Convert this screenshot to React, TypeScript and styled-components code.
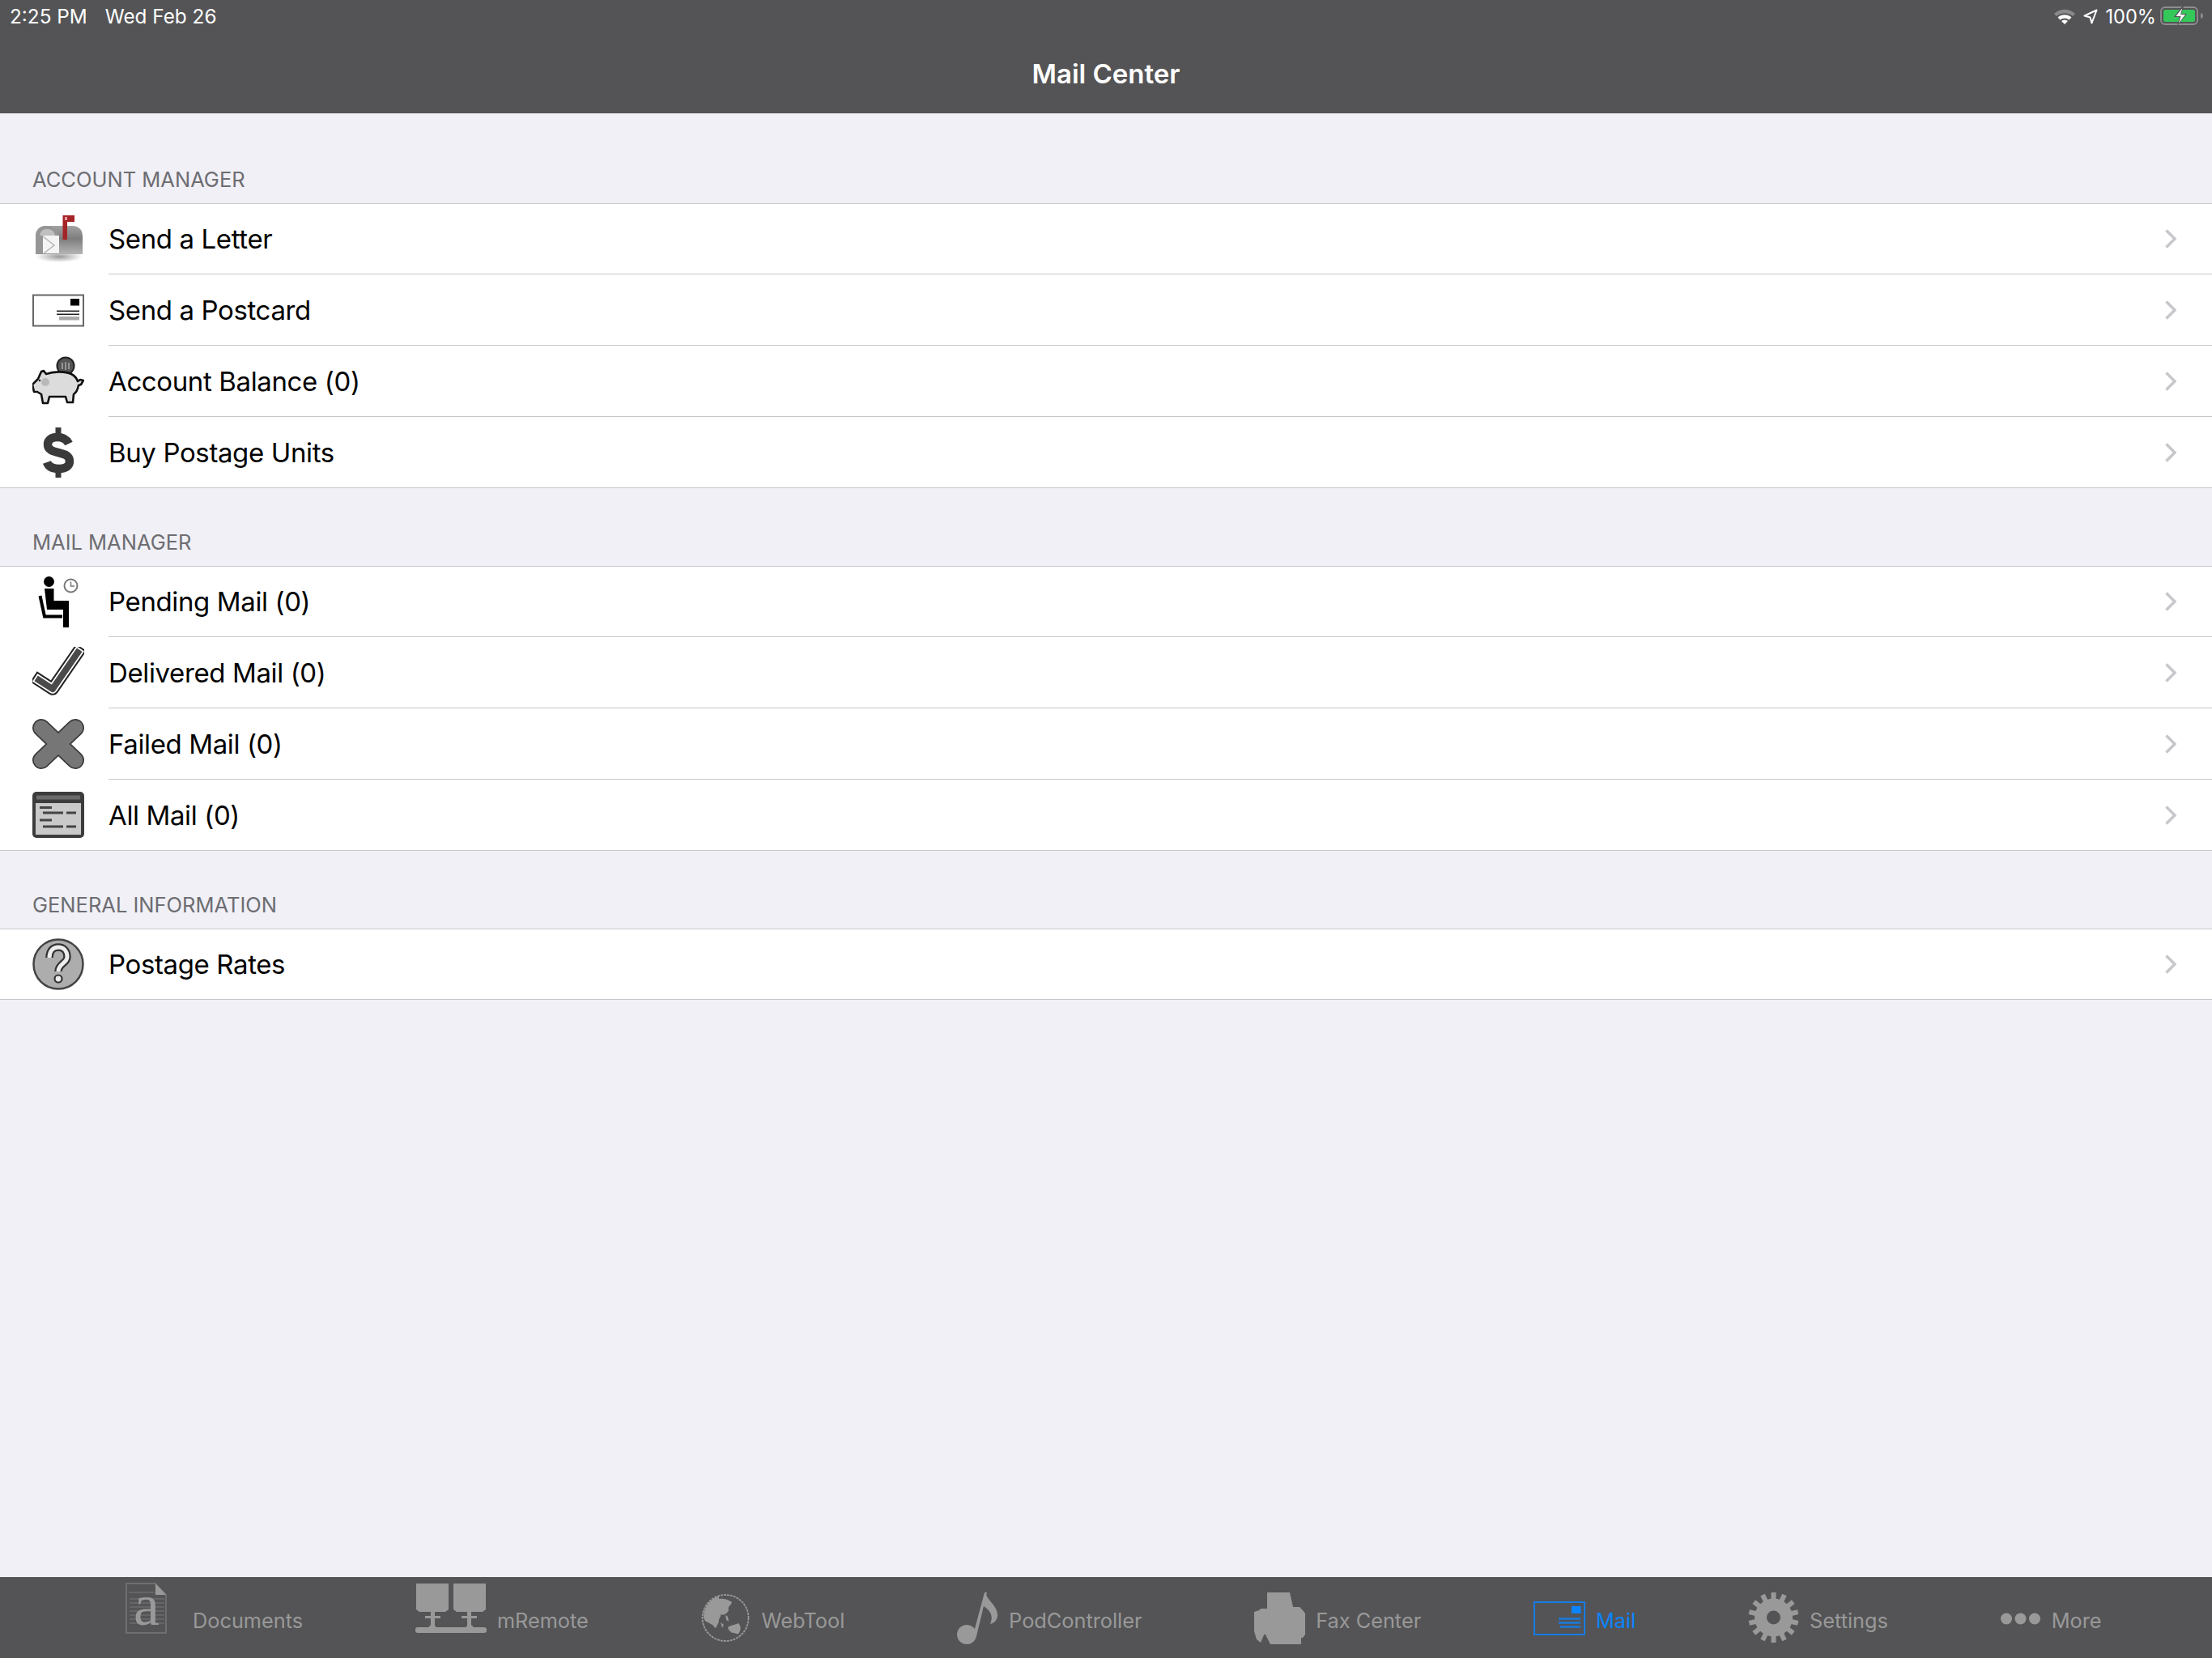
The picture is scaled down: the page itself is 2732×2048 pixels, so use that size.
import { createGlobalStyle } from 'styled-components';
import styled from 'styled-components';
import type { ReactNode } from 'react';

const Global = createGlobalStyle`
  html, body {
    margin: 0;
    padding: 0;
    background: #f0f0f6;
  }
  * {
    box-sizing: border-box;
  }
`;

const Screen = styled.div`
  width: 2732px;
  height: 2048px;
  display: flex;
  flex-direction: column;
  overflow: hidden;
  background: #f0f0f6;
  font-family: Inter, "Liberation Sans", sans-serif;
`;
const Header = styled.header`
  height: 140px;
  flex: none;
  background: #545456;
  color: #fff;
`;
const StatusBar = styled.div`
  height: 40px;
  padding: 0 10px 0 12px;
  display: flex;
  align-items: center;
  justify-content: space-between;
  font-size: 24.3px;
  color: #fff;
`;
const StatusGroup = styled.div`
  display: flex;
  align-items: center;
`;
const DateText = styled.span`
  margin-left: 22px;
`;
const Percent = styled.span`
  font-size: 23.6px;
`;
const StatusIcon = styled.svg<{ $right?: number; $left?: number }>`
  margin-right: ${(p) => p.$right ?? 0}px;
  margin-left: ${(p) => p.$left ?? 0}px;
`;
const Title = styled.h1`
  margin: 0;
  height: 100px;
  padding-top: 1px;
  display: flex;
  align-items: center;
  justify-content: center;
  font-size: 33px;
  font-weight: 600;
`;
const Content = styled.main`
  flex: 1;
`;
const SectionTitle = styled.div<{ $first?: boolean }>`
  height: ${(p) => (p.$first ? 111 : 96)}px;
  padding: 0 40px 14px;
  display: flex;
  align-items: flex-end;
  font-size: 25.5px;
  line-height: 30px;
  color: #6d6d72;
  text-transform: uppercase;
`;
const Group = styled.ul`
  margin: 0;
  padding: 0;
  list-style: none;
  background: #fff;
  border-top: 1px solid #c8c7cc;
  border-bottom: 1px solid #c8c7cc;
`;
const Row = styled.li`
  height: 88px;
  padding-left: 40px;
  display: flex;
  align-items: center;
  &:first-child,
  &:last-child {
    height: 87px;
  }
  &:only-child {
    height: 86px;
  }
  &:last-child > div {
    border-bottom: none;
  }
`;
const RowIcon = styled.svg`
  width: 64px;
  height: 64px;
  flex: none;
`;
const RowBody = styled.div`
  flex: 1;
  height: 100%;
  margin-left: 30px;
  padding-right: 44px;
  display: flex;
  align-items: center;
  justify-content: space-between;
  border-bottom: 1px solid #c8c7cc;
`;
const RowLabel = styled.span`
  font-size: 33px;
  letter-spacing: -0.38px;
  color: #000;
`;
const Chevron = styled.svg`
  width: 14px;
  height: 24px;
`;
const TabBar = styled.nav`
  height: 100px;
  flex: none;
  padding-left: 155px;
  display: flex;
  gap: 138.8px;
  background: #545456;
`;
const Tab = styled.div<{ $active?: boolean }>`
  height: 100%;
  display: flex;
  color: ${(p) => (p.$active ? '#0a84ff' : '#999')};
`;
const TabIcon = styled.svg<{ $top: number; $width: number; $height: number; $gap?: number }>`
  width: ${(p) => p.$width}px;
  height: ${(p) => p.$height}px;
  margin-top: ${(p) => p.$top}px;
  margin-right: ${(p) => p.$gap ?? 13}px;
  flex: none;
  overflow: visible;
`;
const TabLabel = styled.span`
  margin-top: 38px;
  font-size: 25.3px;
  line-height: 32px;
`;

function ChevronRight() {
  return (
    <Chevron viewBox="0 0 14 24">
      <path d="M1.500 1.500L12 12L1.500 22.500" fill="none" stroke="#c7c7cc" strokeWidth="3.600" />
    </Chevron>
  );
}

function Wifi() {
  return (
    <StatusIcon $right={9} width="28" height="20" viewBox="0 0 28 20">
      <path d="M1 7C8.500 0 19.500 0 27 7l-3 3C18 5 10 5 4 10z" fill="#8a8a8c" />
      <path d="M5.500 11.500c5-4.400 12-4.400 17 0l-3 3c-3.400-2.800-7.600-2.800-11 0z" fill="#fff" />
      <path d="M10 16c2.500-2 5.500-2 8 0l-4 4z" fill="#fff" />
    </StatusIcon>
  );
}

function Location() {
  return (
    <StatusIcon $right={9} width="18" height="19" viewBox="0 0 18 19">
      <path d="M1.500 8.500L16.500 1.500L10.500 17.500L8.500 10.500z" fill="none" stroke="#fff" strokeWidth="2" strokeLinejoin="round" />
    </StatusIcon>
  );
}

function Battery() {
  return (
    <StatusIcon $left={5} width="54" height="24" viewBox="0 0 54 24">
      <rect x="1" y="1" width="45" height="21" rx="5" fill="none" stroke="#8e8e90" strokeWidth="1.800" />
      <rect x="4" y="4" width="39" height="15" rx="2.500" fill="#34c759" />
      <path d="M50 8c2 .5 3 2 3 3.500s-1 3-3 3.500z" fill="#8e8e90" />
      <path d="M27 0L17 13h7l-3 11 12-15h-7l3-9z" fill="#545456" />
      <path d="M26.500 3L19.500 12h6l-2.500 8.500 8-10.500h-6l2-7z" fill="#fff" />
    </StatusIcon>
  );
}

function Mailbox() {
  return (
    <RowIcon viewBox="0 0 64 64">
      <defs>
        <linearGradient id="boxFill" x1="0" y1="0" x2="0" y2="1">
          <stop offset="0" stopColor="#a2a2a2" />
          <stop offset="0.45" stopColor="#7d7d7d" />
          <stop offset="1" stopColor="#b5b5b5" />
        </linearGradient>
        <radialGradient id="boxShadow">
          <stop offset="0" stopColor="#999" />
          <stop offset="1" stopColor="#fff" />
        </radialGradient>
      </defs>
      <ellipse cx="33" cy="53" rx="29" ry="7" fill="url(#boxShadow)" />
      <path d="M4 50V28C4 19 10 15 17 15H50C57 15 62 20 62 28V50z" fill="url(#boxFill)" />
      <path d="M4 50V28C4 19 10 15 17 15C24 15 33 20 33 28V50z" fill="#969696" />
      <path d="M9 27C10 21 13 19 18 19S27 21 28 27z" fill="#c0c0c0" />
      <path d="M13 27H33V49H13z" fill="#f4f4f4" />
      <path d="M13 28L27 39L14 49" fill="none" stroke="#b5b5b5" strokeWidth="1.500" />
      <path d="M37.500 2H52V10H43V32H37.500z" fill="#a52428" />
      <path d="M40 4H43V8H40z" fill="#e09c9c" />
    </RowIcon>
  );
}

function Postcard() {
  return (
    <RowIcon viewBox="0 0 64 64">
      <rect x="1" y="13.500" width="62" height="38" fill="#fff" stroke="#666" strokeWidth="2" />
      <rect x="47" y="18" width="11" height="8.500" fill="#000" />
      <path d="M30 32.500H58V34H30zM30 36.500H58V38H30z" fill="#222" />
      <rect x="33" y="40" width="25" height="4.500" fill="#aaa" />
    </RowIcon>
  );
}

function Piggy() {
  return (
    <RowIcon viewBox="0 0 64 64">
      <circle cx="41" cy="13" r="10.500" fill="#555" stroke="#222" strokeWidth="2" />
      <path d="M37 9v8M41 8v10M45 9v8" stroke="#aaa" strokeWidth="1.500" />
      <path
        d="M11 20l3-1 3 4c8-3 23-4 31 0 4 2 7 6 8 9l3-2 4 1-3 5-3 1c-1 5-3 9-6 11l-1 10h-7l-2-7H21l-2 8h-6l-2-11-5-3H2l-2-9 7-7z"
        fill="#dcdcdc"
        stroke="#111"
        strokeWidth="2.600"
        strokeLinejoin="round"
      />
      <circle cx="16" cy="33" r="5" fill="#aaa" opacity="0.7" />
      <circle cx="9" cy="31" r="1.200" fill="#111" />
    </RowIcon>
  );
}

function Dollar() {
  return (
    <RowIcon viewBox="0 0 64 64">
      <path
        d="M45 21C42 15 36 13 31 13 24 13 19 16 19 22 19 36 46 28 46 43 46 49 40 52 33 52 26 52 20 50 18 44"
        fill="none"
        stroke="#3a3a3a"
        strokeWidth="10.500"
      />
      <path d="M32 1V14M32 50V63" stroke="#3a3a3a" strokeWidth="7" />
    </RowIcon>
  );
}

function Waiting() {
  return (
    <RowIcon viewBox="0 0 64 64">
      <circle cx="20.500" cy="6.500" r="6.500" fill="#000" />
      <path d="M15 15H26.500V30H45V63H38V41H18z" fill="#000" />
      <path d="M9.500 24L15 49.500H37" fill="none" stroke="#000" strokeWidth="4" />
      <circle cx="47.500" cy="11.500" r="8" fill="#fff" stroke="#777" strokeWidth="2" />
      <path d="M47.500 6.500V12H52" fill="none" stroke="#777" strokeWidth="1.500" />
    </RowIcon>
  );
}

function Check() {
  const line = 'M8 41L25 52L56 7';
  return (
    <RowIcon viewBox="0 0 64 64">
      <path d={line} fill="none" stroke="#222" strokeWidth="15.500" strokeLinejoin="round" strokeLinecap="square" />
      <path d={line} fill="none" stroke="#fff" strokeWidth="11.500" strokeLinejoin="round" strokeLinecap="square" />
      <path d={line} fill="none" stroke="#4a4a4a" strokeWidth="8" strokeLinejoin="round" strokeLinecap="square" />
    </RowIcon>
  );
}

function Cross() {
  const line = 'M11 12L53 52M53 12L11 52';
  return (
    <RowIcon viewBox="0 0 64 64">
      <path d={line} fill="none" stroke="#3c3c3c" strokeWidth="22" strokeLinecap="round" />
      <path d={line} fill="none" stroke="#767676" strokeWidth="18.500" strokeLinecap="round" />
    </RowIcon>
  );
}

function MailList() {
  return (
    <RowIcon viewBox="0 0 64 64">
      <rect x="0" y="3" width="64" height="57" rx="5" fill="#3c3c3c" />
      <rect x="5" y="7.500" width="54" height="5" fill="#6a6a6a" />
      <rect x="4" y="17" width="56" height="39" fill="#c9c9c9" />
      <path d="M9 22.500H24M13 29H38M42 29H54M9 38H24M13 46H38M42 46H54" stroke="#444" strokeWidth="2.800" />
    </RowIcon>
  );
}

function Question() {
  const mark = 'M21 24C21 15 26 11 32 11S43 15 43 23C43 31 32 31 32 41';
  return (
    <RowIcon viewBox="0 0 64 64">
      <circle cx="32" cy="32" r="30.500" fill="#adadad" stroke="#444" strokeWidth="2.500" />
      <path d={mark} fill="none" stroke="#333" strokeWidth="9.500" />
      <path d={mark} fill="none" stroke="#eee" strokeWidth="5" />
      <circle cx="32" cy="50" r="4.500" fill="#eee" stroke="#333" strokeWidth="2.200" />
    </RowIcon>
  );
}

function TabDocuments() {
  return (
    <TabIcon $top={7} $width={51} $height={63} $gap={32} viewBox="0 0 51 63">
      <path d="M1 1H37L50 15V62H1z" fill="none" stroke="#777" strokeWidth="1.500" />
      <path d="M37 1V15H50z" fill="#999" />
      <path d="M4 12H36M5 20H48M5 25H48M5 30H48M5 35H48M5 40H48M5 45H48M5 50H48" stroke="#6b6b6d" strokeWidth="1.500" />
      <text x="10" y="52" fontFamily="Liberation Serif, serif" fontSize="72" fill="#999">a</text>
    </TabIcon>
  );
}

function TabRemote() {
  return (
    <TabIcon $top={7} $width={88} $height={63} viewBox="0 0 88 63" fill="#999">
      <path d="M1 1H41V33L37 36H5L1 33zM47 1H87V33L83 36H51L47 33z" />
      <path d="M19 35H24V56H19zM64 35H69V56H64z" />
      <rect x="0" y="55" width="88" height="7" rx="3" />
      <circle cx="21" cy="57" r="5" />
      <circle cx="67" cy="57" r="5" />
      <path d="M12 41H31V44H12zM57 41H76V44H57z" />
    </TabIcon>
  );
}

function TabWeb() {
  return (
    <TabIcon $top={20} $width={60} $height={61} $gap={15} viewBox="0 0 60 61" fill="#999">
      <circle cx="30" cy="30.500" r="28.500" fill="none" stroke="#999" strokeWidth="1.800" strokeDasharray="3 1" />
      <path d="M22 4C12 7 4 15 3 28c0 5 3 8 6 8 3 3 6 2 8 7 3-1 3-5 5-8-1-4 3-5 2-9 4 2 8-1 10-5-2-5 4-7 4-10-5-4-12-5-16-4z" />
      <path d="M24 36l4 3-2 4zM30 27l3 2 1 6-3-2z" />
      <path d="M33 42c4-3 9-3 13-5 3 3 4 8 0 13-3 1-5-2-8-1-2-2-5-4-5-7z" />
    </TabIcon>
  );
}

function TabPod() {
  return (
    <TabIcon $top={19} $width={51} $height={64} viewBox="0 0 51 64" fill="#999">
      <ellipse cx="12" cy="52" rx="12" ry="12" />
      <path d="M20 52L34 0H37L24 54z" />
      <path d="M35 0C37 10 50 16 50 28 50 34 46 38 41 39 44 32 44 24 33 17z" />
    </TabIcon>
  );
}

function TabFax() {
  return (
    <TabIcon $top={19} $width={63} $height={64} viewBox="0 0 63 64" fill="#999">
      <path d="M16 0H44L48 18H56L60 22L63 26V52L60 56H58V64H20L14 52H6L3 46V26L8 20H16z" />
      <path d="M0 24L6 22V52L14 48L8 62L3 58L0 48z" />
    </TabIcon>
  );
}

function TabMail() {
  return (
    <TabIcon $top={30} $width={64} $height={42} viewBox="0 0 64 42">
      <rect x="1" y="1" width="62" height="40" fill="none" stroke="#0a84ff" strokeWidth="2" opacity="0.85" />
      <rect x="47" y="6" width="11.500" height="9" fill="#0a84ff" />
      <path d="M31 21.500H58M31 26.500H58M33 31.500H58" stroke="#0a84ff" strokeWidth="2.500" opacity="0.8" />
    </TabIcon>
  );
}

function TabSettings() {
  const teeth = Array.from({ length: 14 }, (_, i) => (i * 360) / 14);
  return (
    <TabIcon $top={19} $width={63} $height={62} viewBox="0 0 63 62">
      {teeth.map((a) => (
        <rect key={a} x="28.500" y="0" width="6" height="14" fill="#999" transform={`rotate(${a} 31.500 31)`} />
      ))}
      <circle cx="31.500" cy="31" r="16" fill="none" stroke="#999" strokeWidth="15" />
    </TabIcon>
  );
}

function TabMore() {
  return (
    <TabIcon $top={44} $width={49} $height={15} $gap={14} viewBox="0 0 49 15" fill="#999">
      <circle cx="7" cy="7.500" r="7" />
      <circle cx="24.500" cy="7.500" r="7" />
      <circle cx="42" cy="7.500" r="7" />
    </TabIcon>
  );
}

type Item = { icon: ReactNode; label: string };

const account: Item[] = [
  { icon: <Mailbox />, label: 'Send a Letter' },
  { icon: <Postcard />, label: 'Send a Postcard' },
  { icon: <Piggy />, label: 'Account Balance (0)' },
  { icon: <Dollar />, label: 'Buy Postage Units' },
];
const mail: Item[] = [
  { icon: <Waiting />, label: 'Pending Mail (0)' },
  { icon: <Check />, label: 'Delivered Mail (0)' },
  { icon: <Cross />, label: 'Failed Mail (0)' },
  { icon: <MailList />, label: 'All Mail (0)' },
];
const general: Item[] = [{ icon: <Question />, label: 'Postage Rates' }];

const tabs: Item[] = [
  { icon: <TabDocuments />, label: 'Documents' },
  { icon: <TabRemote />, label: 'mRemote' },
  { icon: <TabWeb />, label: 'WebTool' },
  { icon: <TabPod />, label: 'PodController' },
  { icon: <TabFax />, label: 'Fax Center' },
  { icon: <TabMail />, label: 'Mail' },
  { icon: <TabSettings />, label: 'Settings' },
  { icon: <TabMore />, label: 'More' },
];

function Section({ title, items, first }: { title: string; items: Item[]; first?: boolean }) {
  return (
    <section>
      <SectionTitle $first={first}>{title}</SectionTitle>
      <Group>
        {items.map((item) => (
          <Row key={item.label}>
            {item.icon}
            <RowBody>
              <RowLabel>{item.label}</RowLabel>
              <ChevronRight />
            </RowBody>
          </Row>
        ))}
      </Group>
    </section>
  );
}

export default function App() {
  return (
    <Screen>
      <Global />
      <Header>
        <StatusBar>
          <StatusGroup>
            <span>2:25 PM</span>
            <DateText>Wed Feb 26</DateText>
          </StatusGroup>
          <StatusGroup>
            <Wifi />
            <Location />
            <Percent>100%</Percent>
            <Battery />
          </StatusGroup>
        </StatusBar>
        <Title>Mail Center</Title>
      </Header>
      <Content>
        <Section first title="Account Manager" items={account} />
        <Section title="Mail Manager" items={mail} />
        <Section title="General Information" items={general} />
      </Content>
      <TabBar>
        {tabs.map((tab) => (
          <Tab key={tab.label} $active={tab.label === 'Mail'}>
            {tab.icon}
            <TabLabel>{tab.label}</TabLabel>
          </Tab>
        ))}
      </TabBar>
    </Screen>
  );
}
